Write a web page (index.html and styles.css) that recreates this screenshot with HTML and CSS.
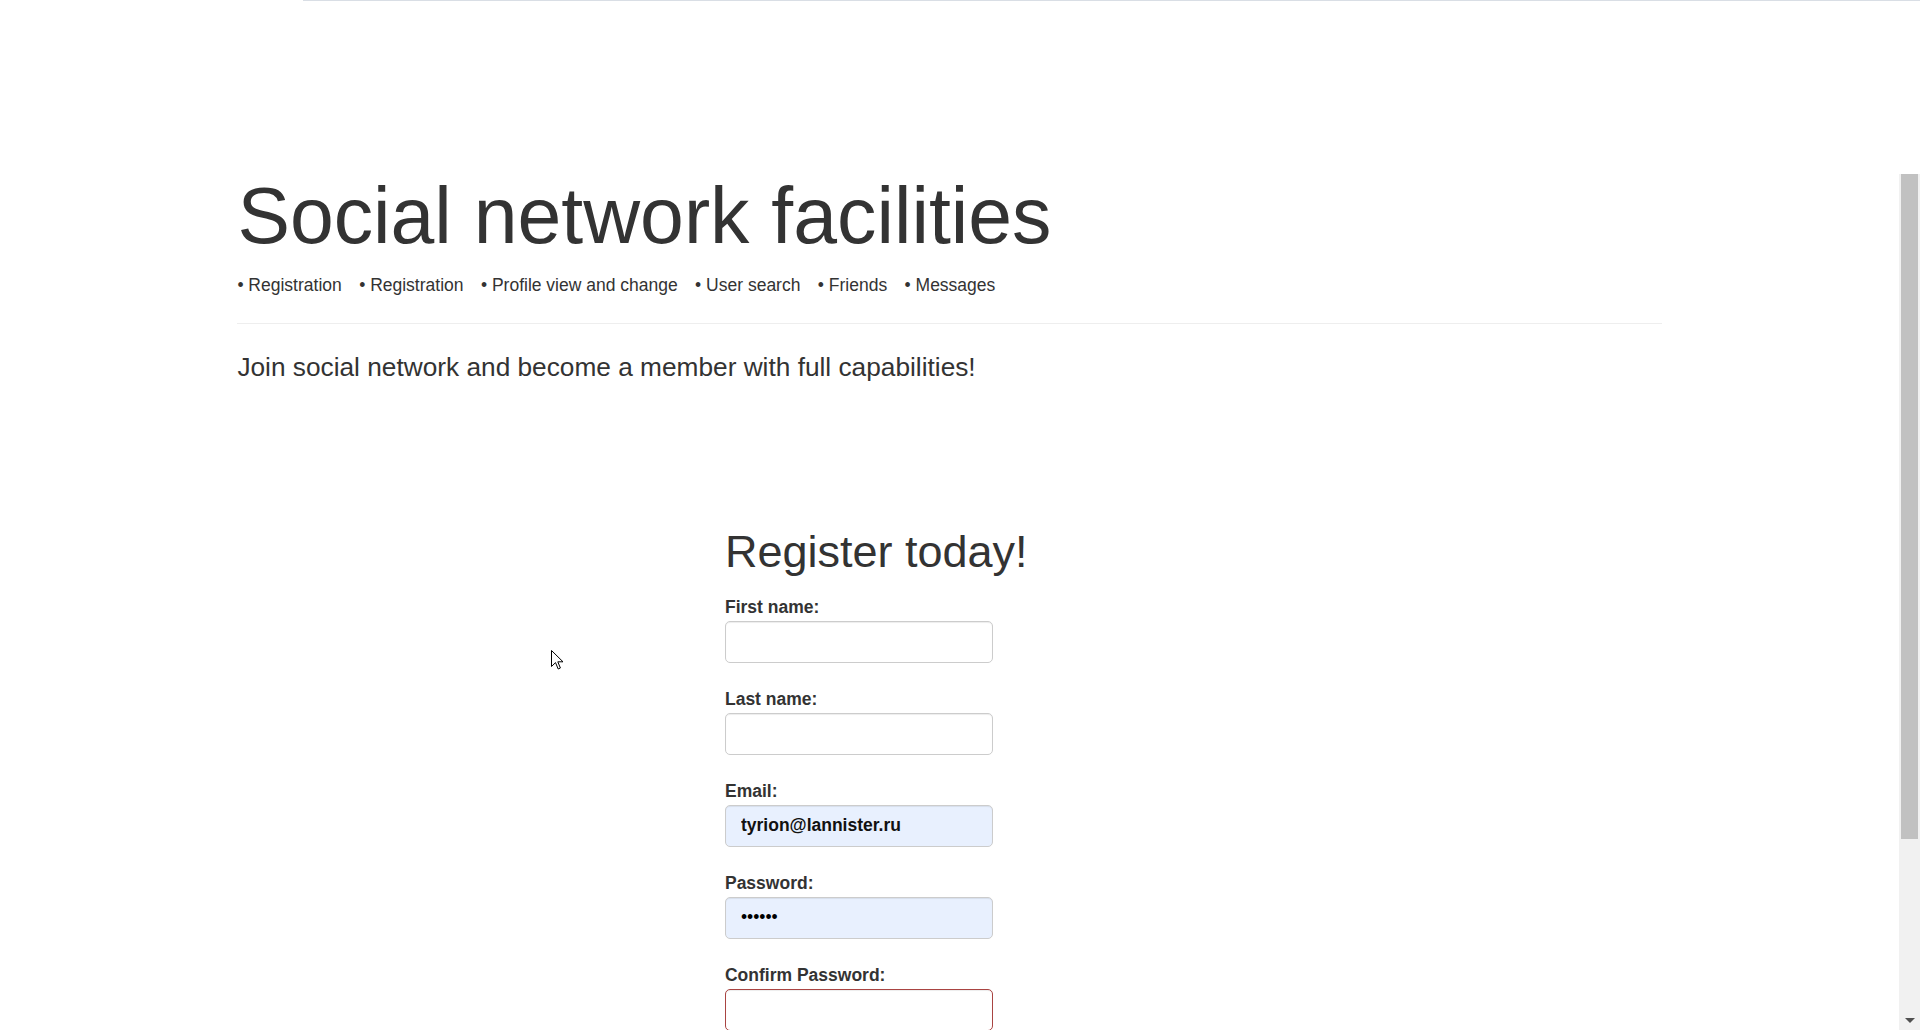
FILE: index.html
```html
<!DOCTYPE html>
<html lang="en">
<head>
<meta charset="utf-8">
<title>Social network facilities</title>
<link rel="stylesheet" href="styles.css">
</head>
<body>
<div class="topline"></div>
<div class="page">
  <div class="container">
    <h1 class="title">Social network facilities</h1>
    <ul class="features">
      <li>• Registration</li>
      <li>• Registration</li>
      <li>• Profile view and change</li>
      <li>• User search</li>
      <li>• Friends</li>
      <li>• Messages</li>
    </ul>
    <hr class="rule">
    <p class="lead">Join social network and become a member with full capabilities!</p>
    <form class="register">
      <h2 class="register-title">Register today!</h2>
      <div class="group">
        <label class="label" for="fn">First name:</label>
        <input class="field" id="fn" type="text">
      </div>
      <div class="group">
        <label class="label" for="ln">Last name:</label>
        <input class="field" id="ln" type="text">
      </div>
      <div class="group">
        <label class="label" for="em">Email:</label>
        <input class="field autofill" id="em" type="text" value="tyrion@lannister.ru">
      </div>
      <div class="group">
        <label class="label" for="pw">Password:</label>
        <input class="field autofill" id="pw" type="password" value="123456">
      </div>
      <div class="group">
        <label class="label" for="cpw">Confirm Password:</label>
        <input class="field error" id="cpw" type="password">
      </div>
    </form>
  </div>
</div>
<div class="scrollbar">
  <div class="thumb"></div>
  <svg class="arrow-down" width="10" height="6" viewBox="0 0 10 6"><path d="M0 0 L10 0 L5 5 Z" fill="#505050"/></svg>
</div>
<svg class="cursor" width="13" height="21" viewBox="0 0 13 21"><path d="M0.5 0.5 L0.5 16.5 L4.5 12.6 L7.2 19 L9.4 18 L6.8 11.8 L12 11.8 Z" fill="#fff" stroke="#000" stroke-width="1" stroke-linejoin="miter"/></svg>
</body>
</html>
```

FILE: styles.css
```css
html, body {
  margin: 0;
  padding: 0;
  height: 1030px;
  overflow: hidden;
  background: #fff;
}

body {
  font-family: "Liberation Sans", Arial, Helvetica, sans-serif;
  color: #333;
  font-size: 17.5px;
  line-height: 25px;
  position: relative;
}

.topline {
  height: 1px;
  margin-left: 303px;
  background: #d9dee5;
}

.page {
  width: 1899px;
}

.container {
  width: 75%;
  margin: 0 auto;
}

.title {
  margin: 172.4px 0 0;
  font-size: 78.75px;
  line-height: 1.1;
  font-weight: 400;
  color: #333;
}

.features {
  list-style: none;
  margin: 13.4px 0 0;
  padding: 0;
  display: flex;
  gap: 17.4px;
  font-size: 17.5px;
  line-height: 25px;
}

.rule {
  margin: 24.6px 0 0;
  border: 0;
  border-top: 1px solid #eee;
  height: 0;
}

.lead {
  margin: 24.5px 0 0;
  font-size: 26.25px;
  line-height: 36.75px;
  font-weight: 300;
}

.register {
  margin: 141.4px 0 0;
  padding-left: 487.6px;
}

.register-title {
  margin: 0 0 19.3px;
  font-size: 45px;
  line-height: 1.1;
  font-weight: 400;
}

.group {
  margin-bottom: 24.3px;
}

.label {
  display: block;
  font-weight: 700;
  line-height: 25px;
  margin-bottom: 0.6px;
}

.field {
  display: block;
  box-sizing: border-box;
  width: 268px;
  height: 42px;
  padding: 7.5px 15px;
  font-family: "Liberation Sans", Arial, Helvetica, sans-serif;
  font-size: 17.5px;
  color: #555;
  background: #fff;
  border: 1px solid #ccc;
  border-radius: 5px;
  box-shadow: inset 0 1px 1px rgba(0, 0, 0, 0.075);
  outline: none;
}

.autofill {
  background: #e8f0fe;
  color: #000;
}

#em {
  font-weight: 700;
  color: #111;
}

.error {
  border-color: #a94442;
}

.scrollbar {
  position: absolute;
  right: 0;
  top: 174px;
  width: 21px;
  height: 856px;
  background: #f1f1f1;
}

.thumb {
  margin: 0 2px;
  height: 665px;
  background: #c1c1c1;
}

.arrow-down {
  position: absolute;
  left: 6px;
  bottom: 6px;
}

.cursor {
  position: absolute;
  left: 551px;
  top: 650px;
}
```
